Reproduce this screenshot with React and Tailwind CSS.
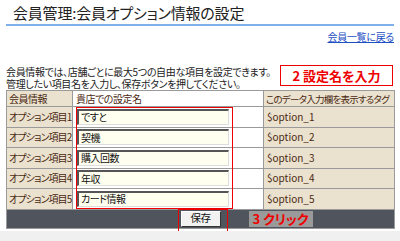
import React from "react";

const rows = [
  ["オプション項目1", "ですと", "$option_1"],
  ["オプション項目2", "契機", "$option_2"],
  ["オプション項目3", "購入回数", "$option_3"],
  ["オプション項目4", "年収", "$option_4"],
  ["オプション項目5", "カード情報", "$option_5"],
];

export default function App() {
  return (
    <div
      className="w-[400px] h-[241px] bg-white overflow-hidden relative text-[#222] [font-feature-settings:'palt']"
      style={{ fontFamily: '"Noto Sans CJK JP", "Noto Sans", sans-serif' }}
    >
      <div className="px-[6px]">
        <div className="pl-[7px] pt-[4px] h-[24px] text-[15px] leading-[18px] tracking-[-0.2px] text-[#222] whitespace-nowrap">
          会員管理:会員オプション情報の設定
        </div>
        <div className="h-[2px] bg-[#7fb0ea]" />
        <div className="flex justify-end pt-[5px] h-[22px]">
          <a className="text-[10px] leading-[12px] tracking-[-0.3px] text-[#1d4fc4] underline">会員一覧に戻る</a>
        </div>
        <div className="flex items-start pt-[17px] h-[42px]">
          <div className="flex-1 text-[10px] leading-[12px] tracking-[-0.35px] pt-[1px] text-[#222] whitespace-nowrap">
            <div>会員情報では、店舗ごとに最大5つの自由な項目を設定できます。</div>
            <div>管理したい項目名を入力し、保存ボタンを押してください。</div>
          </div>
          <div className="w-[113px] h-[21px] mr-[1px] border border-[#e00] flex items-center justify-center text-[#e00] text-[13px] font-bold leading-none whitespace-nowrap">
            2 設定名を入力
          </div>
        </div>
        <div className="relative">
          <table className="w-[388px] border-collapse text-[10px] tracking-[-0.5px] text-[#4a2a12] table-fixed">
            <colgroup>
              <col className="w-[66px]" />
              <col className="w-[191px]" />
              <col className="w-[131px]" />
            </colgroup>
            <tbody>
              <tr className="h-[16px]">
                <td className="border border-[#9a9a9a] bg-[#ebe1cf] px-[2px] py-0 leading-[12px] whitespace-nowrap">会員情報</td>
                <td className="border border-[#9a9a9a] bg-white px-[3px] py-0 leading-[12px] whitespace-nowrap">貴店での設定名</td>
                <td className="border border-[#9a9a9a] bg-[#ebe1cf] px-[2px] py-0 leading-[12px] whitespace-nowrap overflow-hidden text-[9.5px] tracking-[-0.75px]">このデータ入力欄を表示するタグ</td>
              </tr>
              {rows.map(([a, b, c]) => (
                <tr key={c} className="h-[20.5px]">
                  <td className="border border-[#9a9a9a] bg-[#ebe1cf] pl-[2px] pr-0 py-0 leading-[12px] whitespace-nowrap overflow-hidden tracking-[-0.9px]">{a}</td>
                  <td className="border border-[#9a9a9a] bg-white pl-[4px] py-0">
                    <div className="w-[152px] h-[16px] bg-[#fffff0] border-t-2 border-l-2 border-[#555] border-b border-r border-b-[#ddd] border-r-[#ddd] flex items-center pl-[2px] text-[10px] text-[#111] leading-none whitespace-nowrap">
                      {b}
                    </div>
                  </td>
                  <td className="border border-[#9a9a9a] bg-[#ebe1cf] px-[3px] py-0 leading-[12px] tracking-normal text-[#4a2a12] whitespace-nowrap">{c}</td>
                </tr>
              ))}
              <tr className="h-[19px]">
                <td colSpan={3} className="border border-[#9a9a9a] bg-[#50545c] p-0">
                  <div className="grid grid-cols-[1fr_auto_1fr] items-center">
                    <div />
                    <div className="relative flex">
                      <button className="w-[40px] h-[16px] bg-[#f2f2f2] border border-t-white border-l-white border-b-[#333] border-r-[#333] text-[10.5px] text-[#111] leading-none">
                        保存
                      </button>
                      <div className="absolute -left-[3px] -top-[2px] w-[50px] h-[23px] border border-[#e00]" />
                    </div>
                    <div className="pl-[28px] flex">
                      <span className="inline-block bg-[#9a9a9a] text-[#e00] font-bold text-[13px] leading-[16px] px-[4px] tracking-normal whitespace-nowrap">
                        3 クリック
                      </span>
                    </div>
                  </div>
                </td>
              </tr>
            </tbody>
          </table>
          <div className="absolute left-[70px] top-[17px] w-[157px] h-[102px] border border-[#e00] pointer-events-none" />
        </div>
      </div>
      <div className="absolute left-0 right-0 bottom-0 h-[10px] bg-[#f0f0f0]" />
    </div>
  );
}
